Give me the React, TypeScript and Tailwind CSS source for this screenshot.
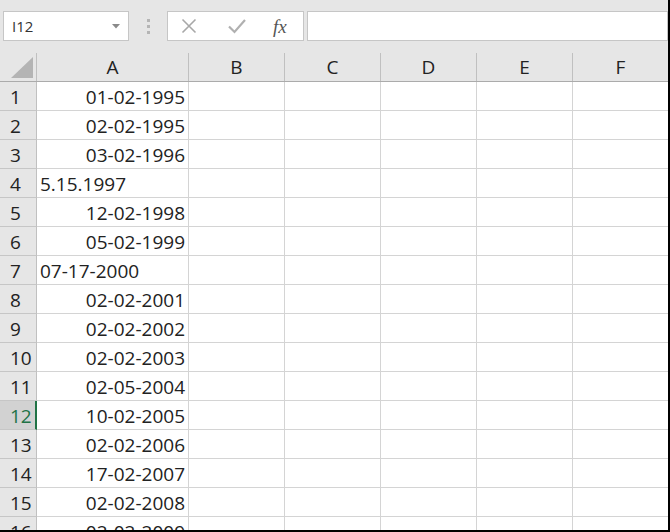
import React from "react";

const cols = ["A", "B", "C", "D", "E", "F"];

const rows: { v: string; left?: boolean }[] = [
  { v: "01-02-1995" },
  { v: "02-02-1995" },
  { v: "03-02-1996" },
  { v: "5.15.1997", left: true },
  { v: "12-02-1998" },
  { v: "05-02-1999" },
  { v: "07-17-2000", left: true },
  { v: "02-02-2001" },
  { v: "02-02-2002" },
  { v: "02-02-2003" },
  { v: "02-05-2004" },
  { v: "10-02-2005" },
  { v: "02-02-2006" },
  { v: "17-02-2007" },
  { v: "02-02-2008" },
  { v: "02-02-2009" },
];

const grid = "grid grid-cols-[37px_152px_96px_96px_96px_96px_96px]";

export default function App() {
  return (
    <div
      className="w-[670px] h-[532px] overflow-hidden bg-white border-r-2 border-b-2 border-black box-border text-[#222]"
      style={{ fontFamily: '"Open Sans", "Noto Sans", sans-serif' }}
    >
      {/* formula bar */}
      <div className="h-[41px] bg-[#e6e6e6] flex items-start pt-[11px]">
        <div className="ml-[3px] w-[126px] h-[30px] bg-white border border-[#c6c6c6] flex items-center justify-between pl-[8px] pr-[8px]">
          <span className="text-[15px] leading-none text-[#333]">I12</span>
          <svg width="8" height="5" viewBox="0 0 8 5">
            <path d="M0 0h8L4 4.5z" fill="#8a8a8a" />
          </svg>
        </div>
        <div className="w-[38px] h-[30px] flex flex-col items-center justify-center gap-[3px]">
          <span className="w-[3px] h-[3px] bg-[#b5b5b5]" />
          <span className="w-[3px] h-[3px] bg-[#b5b5b5]" />
          <span className="w-[3px] h-[3px] bg-[#b5b5b5]" />
        </div>
        <div className="w-[137px] h-[30px] bg-white border border-[#c6c6c6] flex items-center">
          <svg className="ml-[13px]" width="16" height="16" viewBox="0 0 16 16">
            <path d="M1.5 1.5l13 13M14.5 1.5l-13 13" stroke="#a8a8a8" strokeWidth="1.6" fill="none" />
          </svg>
          <svg className="ml-[31px]" width="18" height="16" viewBox="0 0 18 16">
            <path d="M1 8.5l5.5 5.5L17 2" stroke="#b0b0b0" strokeWidth="2.2" fill="none" />
          </svg>
          <span
            className="ml-[27px] text-[19px] italic leading-none text-[#555]"
            style={{ fontFamily: '"Liberation Serif", serif' }}
          >
            fx
          </span>
        </div>
        <div className="ml-[3px] flex-1 h-[30px] bg-white border border-[#c6c6c6]" />
      </div>

      {/* column headers */}
      <div className={`${grid} h-[41px] bg-[#e6e6e6] border-b border-[#ababab]`}>
        <div className="pt-[12px]">
          <div className="h-[28px] border-r border-[#c0c0c0] flex items-end justify-end pr-[3px] pb-[3px]">
            <svg width="22" height="21" viewBox="0 0 22 21">
              <path d="M22 0V21H0z" fill="#b4b4b4" />
            </svg>
          </div>
        </div>
        {cols.map((c) => (
          <div key={c} className="pt-[12px]">
            <div className="h-[28px] border-r border-[#c0c0c0] flex items-center justify-center text-[19px] leading-none">
              {c}
            </div>
          </div>
        ))}
      </div>

      {/* rows */}
      {rows.map((r, i) => {
        const sel = i === 11;
        return (
          <div key={i} className={`${grid} h-[29px]`}>
            <div
              className={`border-b border-[#c6c6c6] flex items-center pl-[10px] pt-[2px] text-[19px] leading-none ${
                sel
                  ? "bg-[#d2d2d2] text-[#217346] border-r-2 border-r-[#217346]"
                  : "bg-[#e6e6e6] border-r border-r-[#c0c0c0]"
              }`}
            >
              {i + 1}
            </div>
            <div
              className={`border-b border-r border-[#d4d4d4] flex items-center pt-[2px] text-[19px] leading-none whitespace-nowrap ${
                r.left ? "justify-start pl-[3px]" : "justify-end pr-[3px]"
              }`}
            >
              {r.v}
            </div>
            {cols.slice(1).map((c) => (
              <div key={c} className="border-b border-r border-[#d4d4d4]" />
            ))}
          </div>
        );
      })}
    </div>
  );
}
